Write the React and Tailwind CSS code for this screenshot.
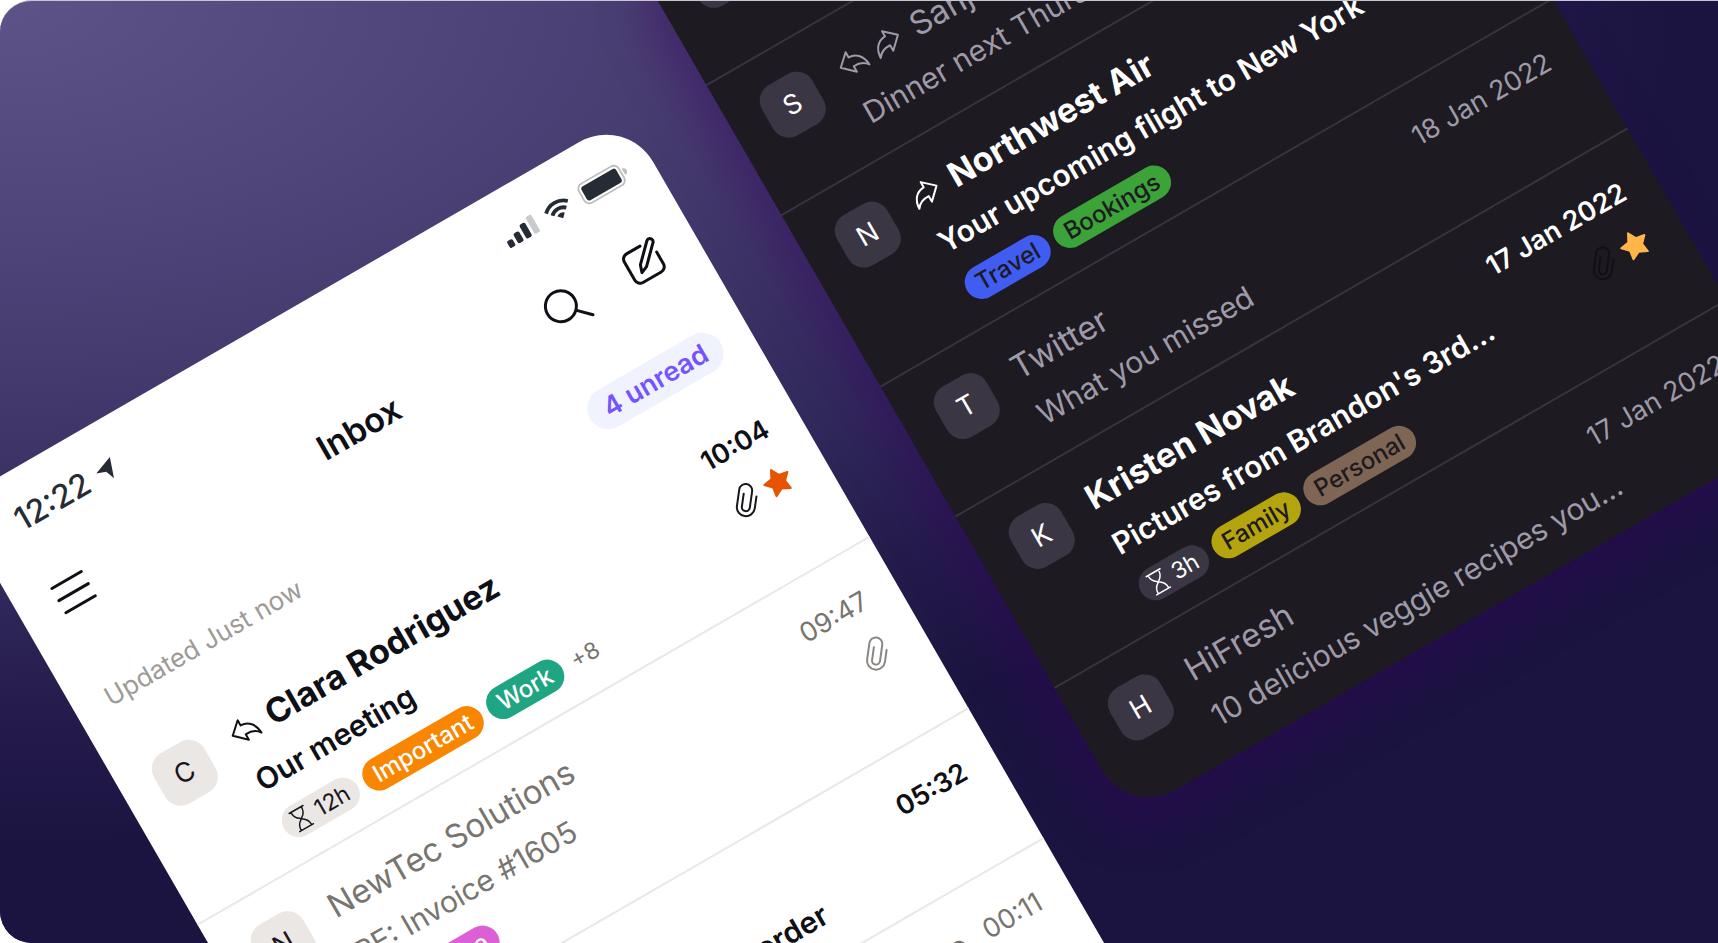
/**
 * Mail hero
 * Two tilted phone inboxes (light and dark) on a purple backdrop
 */

import clsx from 'clsx';

const lightMails = [
    {
        initial: 'C',
        name: 'Clara Rodriguez',
        subject: 'Our meeting',
        date: '10:04',
        unread: true,
        replied: true,
        clip: true,
        starred: true,
        snooze: '12h',
        tags: [
            { label: 'Important', color: 'bg-[#f98600]' },
            { label: 'Work', color: 'bg-[#1fa582]' },
        ],
        more: '+8',
    },
    {
        initial: 'N',
        name: 'NewTec Solutions',
        subject: 'RE: Invoice #1605',
        date: '09:47',
        clip: true,
        tags: [{ label: 'Purchase', color: 'bg-[#dc5fd8]' }],
    },
    {
        initial: 'C',
        name: 'Carsten Howell',
        subject: 'We are packing up your order',
        date: '05:32',
        unread: true,
    },
    {
        initial: 'S',
        name: 'Summer Camp Announcements to',
        subject: 'Weekly news',
        date: '00:11',
    },
];

const darkMails = [
    { initial: 'G', name: 'Gabriel', subject: 'Hello', date: '' },
    {
        initial: 'S',
        name: 'Sanjay',
        subject: 'Dinner next Thursday',
        date: '',
        replied: true,
        forwarded: true,
    },
    {
        initial: 'N',
        name: 'Northwest Air',
        subject: 'Your upcoming flight to New York',
        date: '',
        unread: true,
        forwarded: true,
        tags: [
            { label: 'Travel', color: 'bg-[#405cf1]' },
            { label: 'Bookings', color: 'bg-[#3ba338]' },
        ],
    },
    { initial: 'T', name: 'Twitter', subject: 'What you missed', date: '18 Jan 2022' },
    {
        initial: 'K',
        name: 'Kristen Novak',
        subject: "Pictures from Brandon's 3rd...",
        date: '17 Jan 2022',
        unread: true,
        clip: true,
        starred: true,
        snooze: '3h',
        tags: [
            { label: 'Family', color: 'bg-[#b4a50f]' },
            { label: 'Personal', color: 'bg-[#7f6553]' },
        ],
    },
    {
        initial: 'H',
        name: 'HiFresh',
        subject: '10 delicious veggie recipes you...',
        date: '17 Jan 2022',
    },
];

const themes = {
    light: {
        row: 'border-[#eae8e5]',
        avatar: 'bg-[#eae7e4] text-[#17171d]',
        unread: 'text-[#0f0f16]',
        read: 'text-[#787570]',
        tag: 'text-white',
        clip: 'text-[#17171d]',
        clipRead: 'text-[#8a8783]',
        star: 'text-[#e65400]',
    },
    dark: {
        row: 'border-[#37333f]',
        avatar: 'bg-[#3b3644] text-white',
        unread: 'text-white',
        read: 'text-[#9f9aa9]',
        tag: 'text-[#1d1a22]',
        clip: 'text-[#111016]',
        clipRead: 'text-[#111016]',
        star: 'text-[#ffb648]',
    },
};

/* Icons */

function ReplyIcon({ className }) {
    return (
        <svg viewBox="0 0 28 28" fill="none" stroke="currentColor" strokeWidth="2" strokeLinejoin="round" className={clsx('mr-[14px] h-7 w-7 shrink-0 overflow-visible', className)} aria-hidden="true">
            <path d="M14 3 2 14l12 11.5v-6.3c6.500-.4 11 1.300 14.500 6.300C28 15.500 22.500 9.200 14 9z" />
        </svg>
    );
}

function ClipIcon({ className }) {
    return (
        <svg viewBox="-18 -18 36 36" fill="none" stroke="currentColor" strokeWidth="2" strokeLinecap="round" className={clsx('h-9 w-9', className)} aria-hidden="true">
            <path transform="rotate(38) translate(-1.500 0)" d="M10.500-5V7A9 9 0 0 1-7.500 7V-9.500a6.500 6.500 0 0 1 13 0V7a4 4 0 0 1-8 0V-6" />
        </svg>
    );
}

function StarIcon({ className }) {
    return (
        <svg viewBox="-18 -18 36 36" fill="currentColor" stroke="currentColor" strokeWidth="2" strokeLinejoin="round" className={clsx('h-9 w-9', className)} aria-hidden="true">
            <path d="M0-14 4.300-5.900 13.300-4.300 6.900 2.200 8.200 11.300 0 7.300-8.200 11.300-6.900 2.200-13.300-4.300-4.300-5.900z" />
        </svg>
    );
}

function HourglassIcon() {
    return (
        <svg viewBox="0 0 18 24" fill="none" stroke="currentColor" strokeWidth="1.500" strokeLinecap="round" strokeLinejoin="round" className="h-6 w-[18px]" aria-hidden="true">
            <path d="M1 1.500h16M1 22.500h16M3 1.500c0 5.500 1.500 7.500 4.800 9.500.8.500.8 1.500 0 2-3.300 2-4.800 4-4.800 9.500M15 1.500c0 5.500-1.500 7.500-4.800 9.500-.8.500-.8 1.500 0 2 3.300 2 4.800 4 4.800 9.500" />
        </svg>
    );
}

function LocationIcon() {
    return (
        <svg viewBox="0 0 22 22" fill="currentColor" className="h-[22px] w-[22px]" aria-hidden="true">
            <path d="M21 1 14 21.500l-3.500-9.500L1 8.500z" />
        </svg>
    );
}

function SignalIcon() {
    return (
        <svg viewBox="0 0 35 20" fill="currentColor" className="h-5 w-[35px]" aria-hidden="true">
            <rect x="0" y="12" width="6.500" height="8" rx="2" />
            <rect x="9.500" y="8.500" width="6.500" height="11.500" rx="2" />
            <rect x="19" y="4" width="6.500" height="16" rx="2" />
            <rect x="28.500" y="0" width="6.500" height="20" rx="2" fill="#c9cacc" />
        </svg>
    );
}

function WifiIcon() {
    return (
        <svg viewBox="0 0 28 20" fill="none" stroke="currentColor" strokeWidth="3.800" className="h-5 w-7" aria-hidden="true">
            <path d="M1.400 7.400a18 18 0 0 1 25.200 0M6 12.400a11.500 11.500 0 0 1 16 0" />
            <path d="M14 20l-4.200-4.300a6 6 0 0 1 8.400 0z" fill="currentColor" stroke="none" />
        </svg>
    );
}

function BatteryIcon() {
    return (
        <svg viewBox="0 0 54 24" className="h-6 w-[54px]" aria-hidden="true">
            <rect x="1" y="1" width="46" height="22" rx="6" fill="none" stroke="#bcbdbf" strokeWidth="1.800" />
            <rect x="4" y="4" width="40" height="16" rx="3" fill="currentColor" />
            <path d="M49.500 8c2.300.8 3.500 2.200 3.500 4s-1.200 3.200-3.500 4z" fill="#bcbdbf" />
        </svg>
    );
}

/* One line of the inbox */
function MailRow({ mail, theme, last }) {
    const t = themes[theme];
    const tone = mail.unread ? t.unread : t.read;
    const tags = mail.tags || [];

    return (
        <li className={clsx('flex items-start gap-[29px] pt-[30px] pr-[34px] pl-9', t.row, !last && 'border-b-2', tags.length ? 'pb-[22px]' : 'pb-6')}>
            <span className={clsx('flex h-[58px] w-[58px] shrink-0 items-center justify-center rounded-[18px] text-[27px]', t.avatar)}>
                {mail.initial}
            </span>

            <div className={clsx('min-w-0 flex-1 whitespace-nowrap', tone)}>
                <div className="flex items-center">
                    {mail.replied && <ReplyIcon />}
                    {mail.forwarded && <ReplyIcon className="-scale-x-100" />}
                    <h2 className={clsx('flex-1 leading-[42px]', mail.unread ? 'text-[34px] font-bold' : 'text-[33px]')}>{mail.name}</h2>
                    <time className={clsx('text-[27px] leading-[42px]', mail.unread && 'font-semibold')}>{mail.date}</time>
                </div>

                <div className="mt-3 flex h-10 items-center justify-end">
                    <p className={clsx('flex-1 text-[30px] leading-10', mail.unread && 'font-semibold')}>{mail.subject}</p>
                    {mail.clip && <ClipIcon className={mail.unread ? t.clip : t.clipRead} />}
                    {mail.starred && <StarIcon className={t.star} />}
                </div>

                {tags.length > 0 && (
                    <div className="mt-4 flex gap-2 text-2xl leading-[34px]">
                        {mail.snooze && (
                            <span className={clsx('flex items-center gap-2 rounded-full px-[11px] text-[23px]', t.avatar)}>
                                <HourglassIcon />
                                {mail.snooze}
                            </span>
                        )}
                        {tags.map((tag) => (
                            <span key={tag.label} className={clsx('rounded-full px-3 font-medium', tag.color, t.tag)}>
                                {tag.label}
                            </span>
                        ))}
                        {mail.more && <span className="pl-1 text-[23px] text-[#787570]">{mail.more}</span>}
                    </div>
                )}
            </div>
        </li>
    );
}

function LightPhone() {
    return (
        <section className="absolute top-[502px] left-[-46px] w-[776px] origin-top-left -rotate-30 rounded-[54px] bg-white pb-40">
            {/* Status bar */}
            <div className="flex h-24 items-center pr-[26px] pl-[45px] text-[#262c35]">
                <span className="text-[32px] font-medium">12:22</span>
                <span className="ml-[10px] flex-1">
                    <LocationIcon />
                </span>
                <div className="flex items-center gap-3">
                    <SignalIcon />
                    <WifiIcon />
                    <BatteryIcon />
                </div>
            </div>

            {/* Title bar */}
            <header className="grid h-[82px] grid-cols-[1fr_auto_1fr] items-center px-10 text-[#0f0f16]">
                <button type="button" aria-label="Menu" className="w-9">
                    <svg viewBox="0 0 36 36" fill="none" stroke="currentColor" strokeWidth="3" strokeLinecap="round" className="h-9 w-9 overflow-visible">
                        <path d="M2 4h34M2 18h34M2 32h34" />
                    </svg>
                </button>
                <h1 className="text-[34px] font-semibold">Inbox</h1>
                <div className="flex items-center justify-end gap-[50px]">
                    <button type="button" aria-label="Search">
                        <svg viewBox="0 0 44 44" fill="none" stroke="currentColor" strokeWidth="3" strokeLinecap="round" className="h-11 w-11">
                            <circle cx="18" cy="18" r="15.500" />
                            <path d="m29.500 29.500 12 12" />
                        </svg>
                    </button>
                    <button type="button" aria-label="Compose">
                        <svg viewBox="0 0 36 36" fill="none" stroke="currentColor" strokeWidth="3" strokeLinecap="round" strokeLinejoin="round" className="h-9 w-9 overflow-visible">
                            <path d="M22.500 1.500H7a6 6 0 0 0-6 6v21a6 6 0 0 0 6 6h21a6 6 0 0 0 6-6V15" />
                            <path d="M11 25.500 13.500 18 31 .5c3-3 7.500 1.500 4.500 4.500L18 22.500z" />
                        </svg>
                    </button>
                </div>
            </header>

            {/* Sync state */}
            <div className="flex items-center justify-between pt-[46px] pr-8 pb-6 pl-[34px]">
                <span className="text-[26px] text-[#9e9b97]">Updated Just now</span>
                <span className="rounded-full bg-[#f0f3fe] px-[17px] text-[27px] leading-[42px] font-semibold text-[#7553ff]">4 unread</span>
            </div>

            <ul>
                {lightMails.map((mail) => (
                    <MailRow key={mail.name} mail={mail} theme="light" />
                ))}
            </ul>
        </section>
    );
}

function DarkPhone() {
    return (
        <section className="absolute bottom-[126px] left-[1129px] w-[776px] origin-bottom-left -rotate-30 rounded-[54px] bg-[#1d1a22] shadow-[-20px_20px_48px_rgba(56,0,98,0.36)]">
            <ul>
                {darkMails.map((mail, i) => (
                    <MailRow key={mail.name} mail={mail} theme="dark" last={i === darkMails.length - 1} />
                ))}
            </ul>
        </section>
    );
}

export default function App() {
    return (
        <main className="relative min-h-screen w-full overflow-hidden rounded-l-[32px] border-t border-[#c9c6d2] bg-[#1b1340] bg-[radial-gradient(1750px_880px_at_0_0,#5e5389_0%,#51467b_24%,#473c70_40%,#3a3063_56%,#30275a_68%,#241b4b_82%,#1b1340_96%)] font-[Inter,sans-serif]">
            <DarkPhone />
            <LightPhone />
        </main>
    );
}
